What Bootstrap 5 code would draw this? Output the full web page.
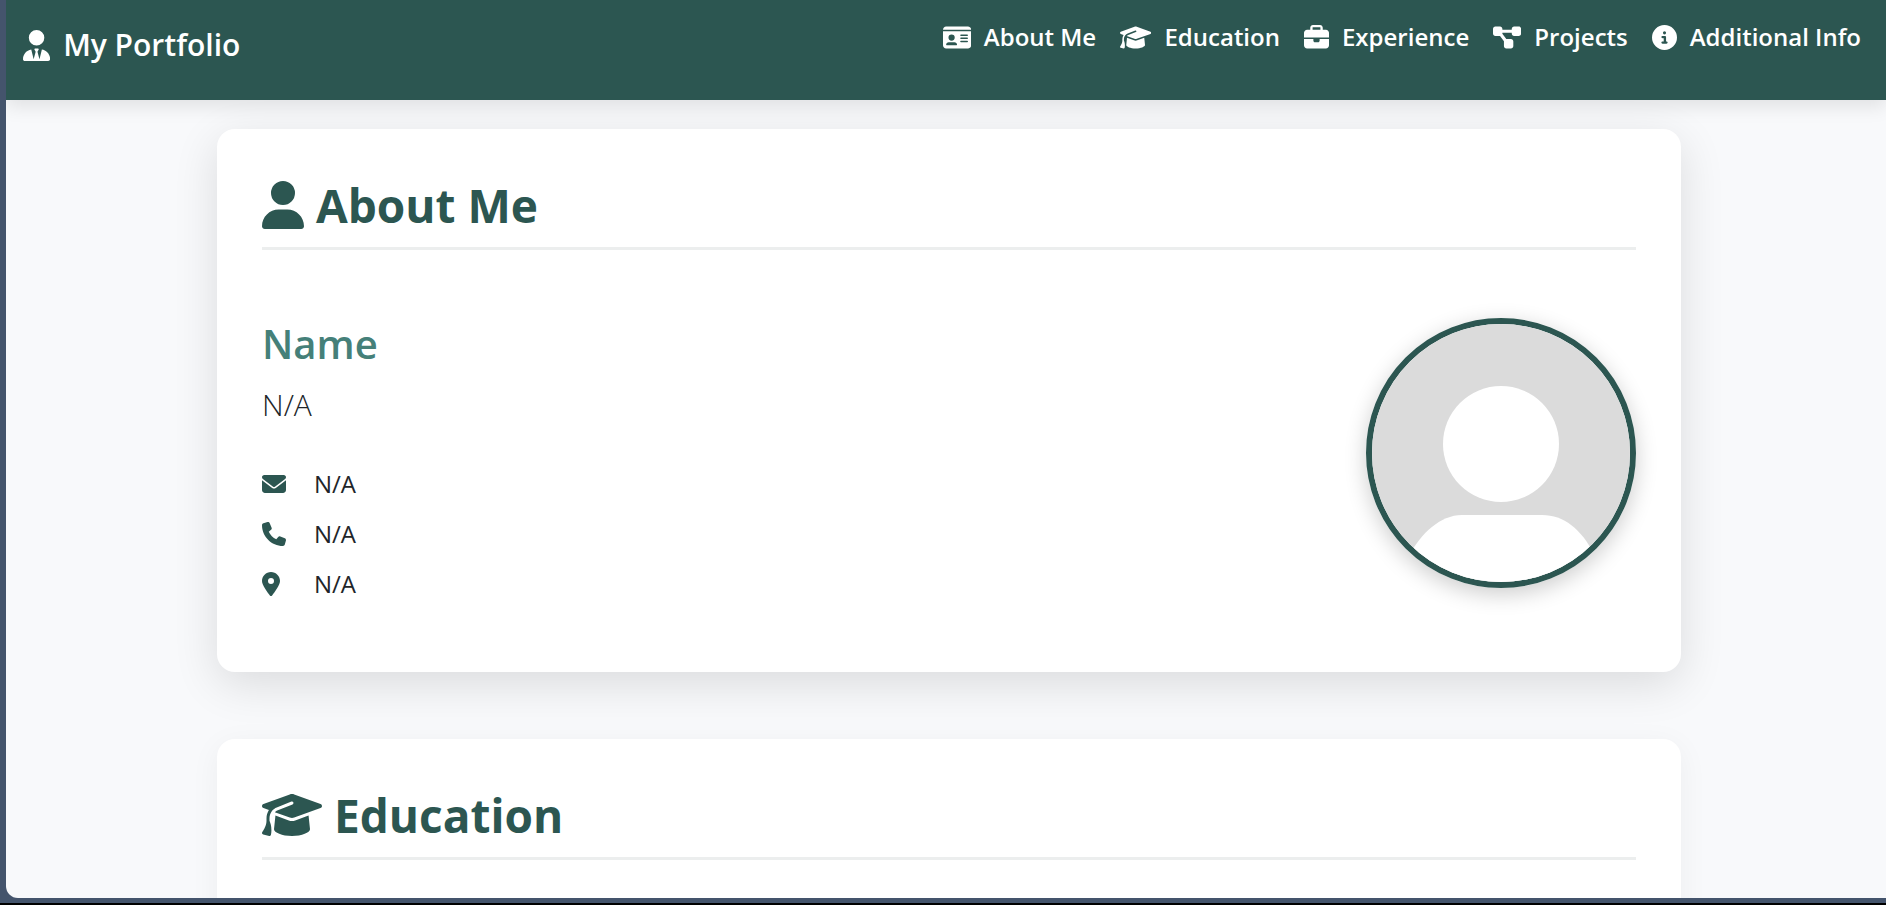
<!DOCTYPE html>
<html lang="en">
<head>
<meta charset="utf-8">
<meta name="viewport" content="width=device-width, initial-scale=1">
<title>My Portfolio</title>
<link href="https://cdn.jsdelivr.net/npm/bootstrap@5.3.0/dist/css/bootstrap.min.css" rel="stylesheet">
<style>
  :root { --pine: #2c5651; --teal: #458079; --mist: #f8f9fb; }
  body { font-family: "Open Sans", "Noto Sans", sans-serif; font-size: 24px; line-height: 36px; color: #212529; background: #44546c; border-bottom: 2px solid #000; }
  .frame { margin: 0 0 5px 6px; background: var(--mist); border-bottom-left-radius: 12px; min-height: 0; }
  .icon { display: block; height: 1em; width: auto; fill: currentColor; flex: none; }
  .topbar { background: var(--pine); height: 100px; padding: 0 25px 0 17px; box-shadow: 0 6px 18px rgba(0,0,0,.1); z-index: 2; flex: none; }
  .topbar .navbar-brand { font-size: 30px; line-height: 44px; font-weight: 600; color: #fff; gap: 13px; padding: 0; margin: 0 0 10px; }
  .brand-icon { font-size: 31px; }
  .topbar .nav { gap: 24px; margin-bottom: 26px; }
  .topbar .nav-link { padding: 0; gap: 13px; color: #fff; font-weight: 600; font-size: 24px; line-height: 36px; }
  .topbar .icon-nav { font-size: 25px; }
  .page { padding: 29px 24px 0 30px; }
  .panel { max-width: 1464px; margin: 0 auto 67px; padding: 45px; border: 0; border-radius: 18px; box-shadow: 0 6px 30px rgba(0,0,0,.05); }
  .panel-raised { box-shadow: 0 12px 45px rgba(0,0,0,.12); }
  .panel h2 { color: var(--pine); font-size: 46px; line-height: 62px; font-weight: 700; gap: 12px; padding-bottom: 11px; margin: 0 0 45px; border-bottom: 3px solid #eceeee; }
  .panel h2 .icon { font-size: 48px; }
  .about-row { padding: 23px 0 25px; }
  .panel h3 { color: var(--teal); font-size: 40px; line-height: 52px; font-weight: 600; margin: 0 0 12px; }
  .headline { font-size: 30px; line-height: 45px; font-weight: 300; margin: 0 0 39px; }
  .contact { gap: 14px; }
  .contact .icon-cell { width: 52px; color: var(--pine); }
  .avatar { width: 270px; height: 270px; border: 6px solid var(--pine); border-radius: 50%; overflow: hidden; box-shadow: 0 6px 22px rgba(0,0,0,.2); flex: none; }
</style>
</head>
<body class="vh-100 d-flex flex-column overflow-hidden">
<svg width="0" height="0" class="position-absolute" aria-hidden="true">
  <symbol id="cap" viewBox="0 0 640 512"><path d="M320 32c-8.1 0-16.1 1.4-23.7 4.1L15.8 137.4C6.3 140.9 0 149.9 0 160s6.3 19.1 15.8 22.6l57.9 20.9C57.3 229.3 48 259.8 48 291.9v28.1c0 28.4-10.8 57.7-22.3 80.8c-6.5 13-13.9 25.8-22.5 37.6C0 442.7-.9 448.3 .9 453.4s6 8.9 11.2 10.2l64 16c4.2 1.1 8.7 .3 12.4-2s6.3-6.1 7.1-10.4c8.6-42.8 4.3-81.2-2.1-108.7C90.3 344.3 86 329.8 80 316.5V291.9c0-30.2 10.2-58.7 27.9-81.5c12.9-15.5 29.6-28 49.2-35.7l157-61.7c8.2-3.2 17.5 .8 20.7 9s-.8 17.5-9 20.7l-157 61.7c-12.4 4.9-23.3 12.4-32.2 21.6l159.6 57.6c7.6 2.7 15.6 4.1 23.7 4.1s16.1-1.4 23.7-4.1L624.2 182.6c9.5-3.4 15.8-12.5 15.8-22.6s-6.3-19.1-15.8-22.6L343.7 36.1C336.1 33.4 328.1 32 320 32zM128 408c0 35.3 86 72 192 72s192-36.7 192-72L496.7 262.6 354.5 314c-11.1 4-22.8 6-34.5 6s-23.5-2-34.5-6L143.3 262.6 128 408z"/></symbol>
</svg>
<div class="frame flex-grow-1 d-flex flex-column overflow-hidden">
  <nav class="topbar d-flex align-items-center justify-content-between position-relative" aria-label="Main">
    <a class="navbar-brand d-flex align-items-center" href="#about">
      <svg class="icon brand-icon" viewBox="0 0 448 512" aria-hidden="true"><path d="M224 256A128 128 0 1 1 224 0a128 128 0 1 1 0 256zM209.1 359.2l-18.6-31c-6.4-10.7 1.3-24.2 13.7-24.2H224h19.7c12.4 0 20.1 13.6 13.7 24.2l-18.6 31 33.4 123.9 39.5-161.2c77.2 12 136.3 78.8 136.3 159.4c0 17-13.8 30.7-30.7 30.7H265.1 182.9 30.7C13.8 512 0 498.2 0 481.3c0-80.6 59.1-147.4 136.3-159.4l39.5 161.2 33.4-123.9z"/></svg>
      <span>My Portfolio</span>
    </a>
    <ul class="nav flex-nowrap">
      <li class="nav-item"><a class="nav-link d-flex align-items-center" href="#about">
        <svg class="icon icon-nav" viewBox="0 0 576 512" aria-hidden="true"><path fill-rule="evenodd" d="M0 96l576 0c0-35.3-28.7-64-64-64H64C28.7 32 0 60.7 0 96zm0 32V416c0 35.3 28.7 64 64 64H512c35.3 0 64-28.7 64-64V128H0zM64 405.3c0-29.5 23.9-53.3 53.3-53.3H234.7c29.5 0 53.3 23.9 53.3 53.3c0 5.9-4.8 10.7-10.7 10.7H74.7c-5.9 0-10.7-4.8-10.7-10.7zM176 192a64 64 0 1 1 0 128 64 64 0 1 1 0-128zm176 16c0-8.8 7.2-16 16-16H496c8.8 0 16 7.2 16 16s-7.2 16-16 16H368c-8.8 0-16-7.2-16-16zm0 64c0-8.8 7.2-16 16-16H496c8.8 0 16 7.2 16 16s-7.2 16-16 16H368c-8.8 0-16-7.2-16-16zm0 64c0-8.8 7.2-16 16-16H496c8.8 0 16 7.2 16 16s-7.2 16-16 16H368c-8.8 0-16-7.2-16-16z"/></svg>
        <span>About Me</span></a></li>
      <li class="nav-item"><a class="nav-link d-flex align-items-center" href="#education">
        <svg class="icon icon-nav" viewBox="0 0 640 512" aria-hidden="true"><use href="#cap"/></svg>
        <span>Education</span></a></li>
      <li class="nav-item"><a class="nav-link d-flex align-items-center" href="#experience">
        <svg class="icon icon-nav" viewBox="0 0 512 512" aria-hidden="true"><path d="M184 48H328c4.4 0 8 3.6 8 8V96H176V56c0-4.4 3.6-8 8-8zm-56 8V96H64C28.7 96 0 124.7 0 160v96H192 320 512V160c0-35.3-28.7-64-64-64H384V56c0-30.9-25.1-56-56-56H184c-30.9 0-56 25.1-56 56zM512 288H320v32c0 17.7-14.3 32-32 32H224c-17.7 0-32-14.3-32-32V288H0V416c0 35.3 28.7 64 64 64H448c35.3 0 64-28.7 64-64V288z"/></svg>
        <span>Experience</span></a></li>
      <li class="nav-item"><a class="nav-link d-flex align-items-center" href="#projects">
        <svg class="icon icon-nav" viewBox="0 0 576 512" aria-hidden="true"><path d="M0 80C0 53.5 21.5 32 48 32h96c26.5 0 48 21.5 48 48V96H384V80c0-26.5 21.5-48 48-48h96c26.5 0 48 21.5 48 48v96c0 26.5-21.5 48-48 48H432c-26.5 0-48-21.5-48-48V160H192v16c0 1.7-.1 3.4-.3 5L272 288h96c26.5 0 48 21.5 48 48v96c0 26.5-21.5 48-48 48H272c-26.5 0-48-21.5-48-48V336c0-1.7 .1-3.4 .3-5L144 224H48c-26.5 0-48-21.5-48-48V80z"/></svg>
        <span>Projects</span></a></li>
      <li class="nav-item"><a class="nav-link d-flex align-items-center" href="#info">
        <svg class="icon icon-nav" viewBox="0 0 512 512" aria-hidden="true"><path fill-rule="evenodd" d="M256 512A256 256 0 1 0 256 0a256 256 0 1 0 0 512zM216 336h24V272H216c-13.3 0-24-10.7-24-24s10.7-24 24-24h48c13.3 0 24 10.7 24 24v88h8c13.3 0 24 10.7 24 24s-10.7 24-24 24H216c-13.3 0-24-10.7-24-24s10.7-24 24-24zm40-208a32 32 0 1 1 0 64 32 32 0 1 1 0-64z"/></svg>
        <span>Additional Info</span></a></li>
    </ul>
  </nav>
  <main class="page">
    <section class="card panel panel-raised" id="about">
      <h2 class="d-flex align-items-center">
        <svg class="icon" viewBox="0 0 448 512" aria-hidden="true"><path d="M224 256A128 128 0 1 0 224 0a128 128 0 1 0 0 256zm-45.7 48C79.8 304 0 383.8 0 482.3C0 498.7 13.3 512 29.7 512H418.3c16.4 0 29.7-13.3 29.7-29.7C448 383.8 368.2 304 269.7 304H178.3z"/></svg>
        <span>About Me</span>
      </h2>
      <div class="about-row d-flex align-items-start justify-content-between">
        <div>
          <h3>Name</h3>
          <p class="headline">N/A</p>
          <ul class="contact list-unstyled d-flex flex-column mb-0">
            <li class="d-flex align-items-center"><span class="icon-cell"><svg class="icon" viewBox="0 0 512 512" role="img" aria-label="Email"><path d="M48 64C21.5 64 0 85.5 0 112c0 15.1 7.1 29.3 19.2 38.4L236.8 313.6c11.4 8.5 27 8.5 38.4 0L492.8 150.4c12.1-9.1 19.2-23.3 19.2-38.4c0-26.5-21.5-48-48-48H48zM0 176V384c0 35.3 28.7 64 64 64H448c35.3 0 64-28.7 64-64V176L294.4 339.2c-22.8 17.1-54 17.1-76.8 0L0 176z"/></svg></span><span>N/A</span></li>
            <li class="d-flex align-items-center"><span class="icon-cell"><svg class="icon" viewBox="0 0 512 512" role="img" aria-label="Phone"><path d="M164.9 24.6c-7.7-18.6-28-28.5-47.4-23.2l-88 24C12.1 30.2 0 46 0 64C0 311.4 200.6 512 448 512c18 0 33.8-12.1 38.6-29.5l24-88c5.3-19.4-4.6-39.7-23.2-47.4l-96-40c-16.3-6.8-35.2-2.1-46.3 11.6L304.7 368C234.3 334.7 177.3 277.7 144 207.3L193.3 167c13.7-11.2 18.4-30 11.6-46.3l-40-96z"/></svg></span><span>N/A</span></li>
            <li class="d-flex align-items-center"><span class="icon-cell"><svg class="icon" viewBox="0 0 384 512" role="img" aria-label="Location"><path fill-rule="evenodd" d="M215.7 499.2C267 435 384 279.4 384 192C384 86 298 0 192 0S0 86 0 192c0 87.4 117 243 168.3 307.2c12.3 15.3 35.1 15.3 47.4 0zM192 128a64 64 0 1 1 0 128 64 64 0 1 1 0-128z"/></svg></span><span>N/A</span></li>
          </ul>
        </div>
        <div class="avatar">
          <svg class="d-block w-100 h-100" viewBox="0 0 258 258" role="img" aria-label="Profile picture"><path fill="#dbdbdb" d="M0 0h258v258H0z"/><circle cx="129" cy="120" r="58" fill="#fff"/><path fill="#fff" d="M38 230C49 210 68 191 90 191h80c22 0 39 14 52 39v28H38z"/></svg>
        </div>
      </div>
    </section>
    <section class="card panel" id="education">
      <h2 class="d-flex align-items-center">
        <svg class="icon" viewBox="0 0 640 512" aria-hidden="true"><use href="#cap"/></svg>
        <span>Education</span>
      </h2>
    </section>
  </main>
</div>
<script src="https://cdn.jsdelivr.net/npm/bootstrap@5.3.0/dist/js/bootstrap.bundle.min.js"></script>
</body>
</html>
